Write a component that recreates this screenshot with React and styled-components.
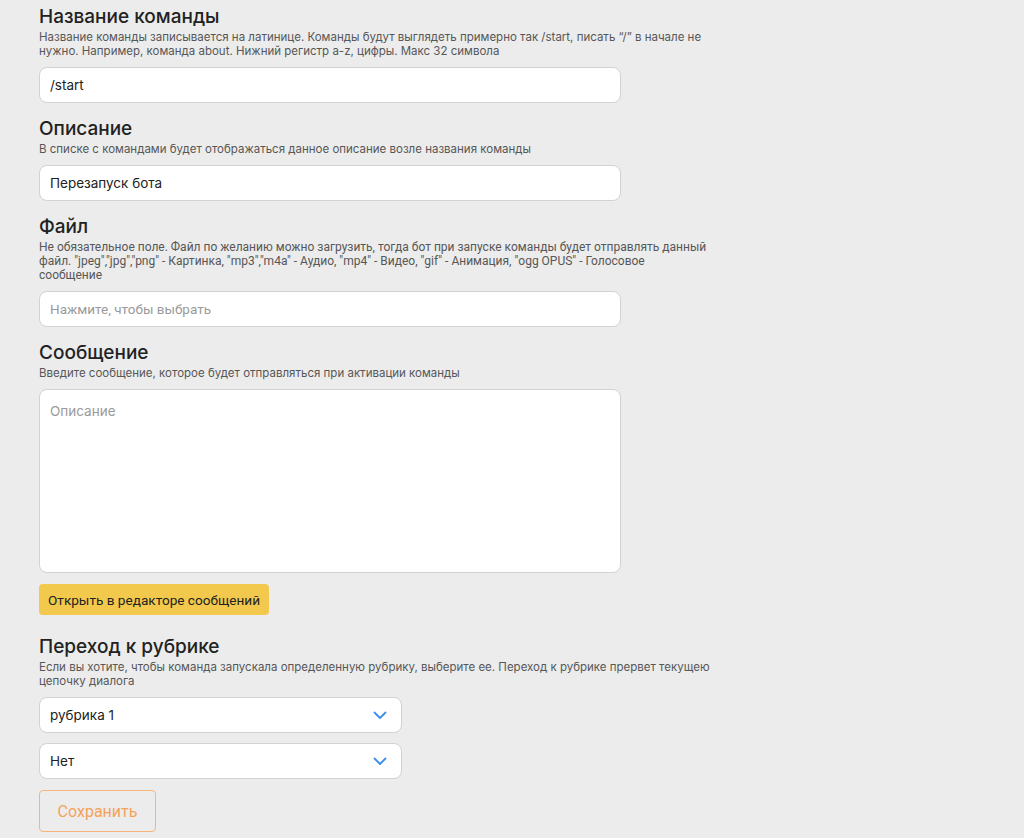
import React from 'react';
import styled, {createGlobalStyle} from 'styled-components';

const GlobalStyle = createGlobalStyle`
  html, body {
    margin: 0;
    padding: 0;
    background: #ececec;
  }
  body {
    font-family: Inter, "Noto Sans", sans-serif;
    color: #222;
  }
`;

const Page = styled.div`
  padding: 6px 0 0 39px;
  min-height: 838px;
  box-sizing: border-box;
`;

const Section = styled.section`
  display: flex;
  flex-direction: column;
  margin-bottom: 15px;
`;

const Title = styled.h2`
  margin: ${p => (p.$spaced ? '6px 0 0' : '0')};
  font-size: 19px;
  line-height: 22px;
  font-weight: 500;
  color: #222;
`;

const Hint = styled.p`
  margin: 2px 0 9px;
  max-width: ${p => (p.$roboto ? 669 : 680)}px;
  font-family: ${p => (p.$roboto ? 'Roboto, sans-serif' : 'Inter, sans-serif')};
  font-size: ${p => (p.$roboto ? 12 : 11.5)}px;
  line-height: 14px;
  color: #575757;
`;

const Field = styled.div`
  width: ${p => p.$width || 582}px;
  height: ${p => p.$height || 36}px;
  box-sizing: border-box;
  display: flex;
  align-items: ${p => (p.$multiline ? 'flex-start' : 'center')};
  justify-content: space-between;
  padding: ${p => (p.$multiline ? '13px 10px' : '0 14px 0 10px')};
  background: #fff;
  border: 1px solid #d2d2d2;
  border-radius: 8px;
  font-family: ${p => (p.$roboto ? 'Roboto, sans-serif' : 'Inter, sans-serif')};
  font-size: 13.5px;
  color: ${p => (p.$placeholder ? '#9a9a9a' : '#222')};
  & + & {
    margin-top: 10px;
  }
`;

const Chevron = () => (
  <svg width="14" height="10" viewBox="0 0 14 10" fill="none">
    <path d="M1.5 2.5l5.5 5.5 5.5-5.5" stroke="#3d8ef0" strokeWidth="1.8" strokeLinecap="round" strokeLinejoin="round" />
  </svg>
);

const EditorButton = styled.button`
  align-self: flex-start;
  margin-top: 11px;
  width: 230px;
  height: 31px;
  padding: 0;
  border: none;
  border-radius: 4px;
  background: #f2c94c;
  font-family: Roboto, sans-serif;
  font-size: 13.6px;
  color: #222;
`;

const SaveButton = styled.button`
  align-self: flex-start;
  margin-top: 11px;
  width: 117px;
  height: 42px;
  border: 1px solid #f7b57a;
  border-radius: 4px;
  background: transparent;
  font-family: Roboto, sans-serif;
  font-size: 16px;
  color: #f5a25a;
`;

export default function App() {
  return (
    <>
      <GlobalStyle />
      <Page>
        <Section>
          <Title>Название команды</Title>
          <Hint>
            Название команды записывается на латинице. Команды будут выглядеть примерно так /start, писать “/” в начале не
            нужно. Например, команда about. Нижний регистр a-z, цифры. Макс 32 символа
          </Hint>
          <Field>/start</Field>
        </Section>

        <Section>
          <Title>Описание</Title>
          <Hint>В списке с командами будет отображаться данное описание возле названия команды</Hint>
          <Field>Перезапуск бота</Field>
        </Section>

        <Section>
          <Title>Файл</Title>
          <Hint $roboto>
            Не обязательное поле. Файл по желанию можно загрузить, тогда бот при запуске команды будет отправлять данный
            файл. "jpeg","jpg","png" - Картинка, "mp3","m4a" - Аудио, "mp4" - Видео, "gif" - Анимация, "ogg OPUS" - Голосовое
            сообщение
          </Hint>
          <Field $roboto $placeholder>Нажмите, чтобы выбрать</Field>
        </Section>

        <Section>
          <Title>Сообщение</Title>
          <Hint>Введите сообщение, которое будет отправляться при активации команды</Hint>
          <Field $multiline $placeholder $height={184}>Описание</Field>
          <EditorButton>Открыть в редакторе сообщений</EditorButton>
        </Section>

        <Section>
          <Title $spaced>Переход к рубрике</Title>
          <Hint>
            Если вы хотите, чтобы команда запускала определенную рубрику, выберите ее. Переход к рубрике прервет текущею
            цепочку диалога
          </Hint>
          <Field $width={363}>
            рубрика 1
            <Chevron />
          </Field>
          <Field $width={363}>
            Нет
            <Chevron />
          </Field>
          <SaveButton>Сохранить</SaveButton>
        </Section>
      </Page>
    </>
  );
}
